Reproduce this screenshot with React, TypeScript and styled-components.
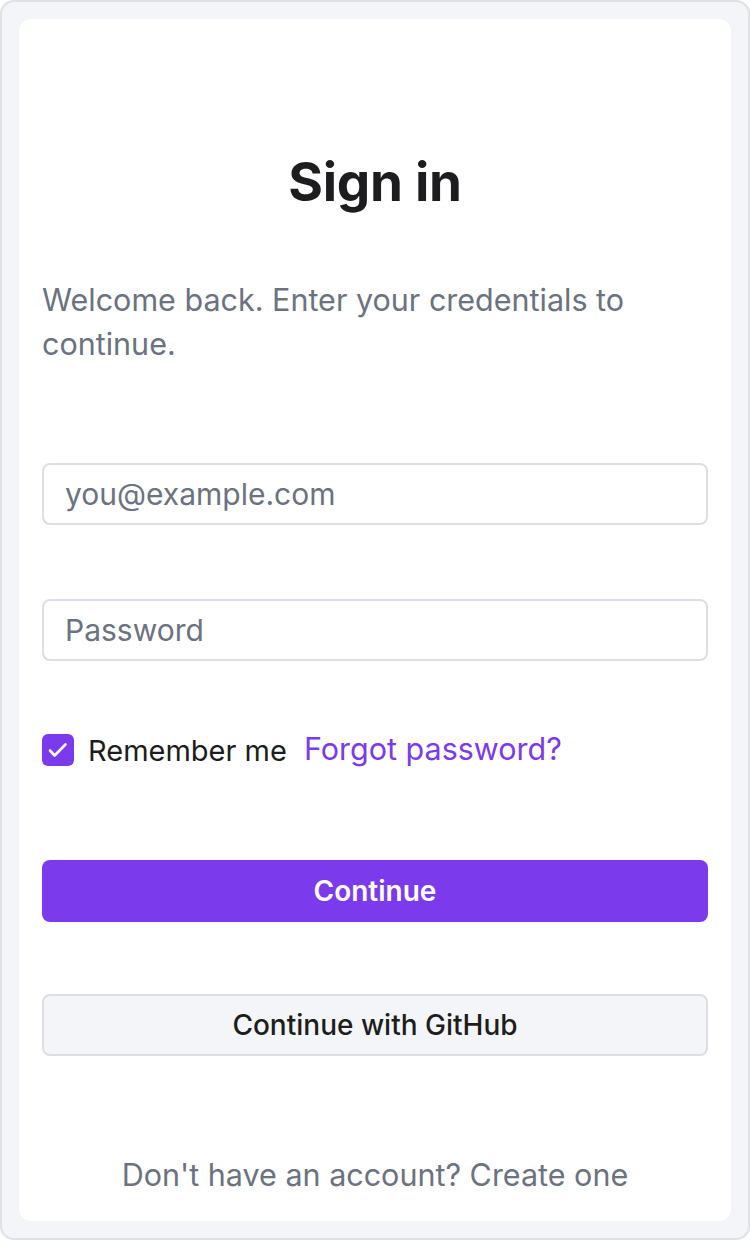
import styled, { createGlobalStyle } from "styled-components";

const GlobalStyle = createGlobalStyle`
  * { box-sizing: border-box; }
  html, body {
    margin: 0;
    padding: 0;
    background: #ffffff;
    font-family: Inter, "Noto Sans", "Liberation Sans", sans-serif;
  }
`;

export default function App() {
  return (
    <>
      <GlobalStyle />
      <Frame>
        <Card>
          <Title>Sign in</Title>
          <Subtitle>Welcome back. Enter your credentials to continue.</Subtitle>

          <Field type="email" placeholder="you@example.com" $top={97} />
          <Field type="password" placeholder="Password" $top={74} />

          <OptionsRow>
            <CheckLabel>
              <CheckBox>
                <svg width="32" height="32" viewBox="0 0 32 32" fill="none">
                  <path
                    d="M8 16.5l4.6 5L23.5 10.5"
                    stroke="#ffffff"
                    strokeWidth="2.6"
                    strokeLinecap="round"
                    strokeLinejoin="round"
                  />
                </svg>
              </CheckBox>
              Remember me
            </CheckLabel>
            <Link href="#">Forgot password?</Link>
          </OptionsRow>

          <Button $variant="primary" $top={88}>
            Continue
          </Button>
          <Button $variant="secondary" $top={72}>
            Continue with GitHub
          </Button>

          <Footer>Don't have an account? Create one</Footer>
        </Card>
      </Frame>
    </>
  );
}

const Frame = styled.div`
  width: 750px;
  height: 1240px;
  padding: 17px;
  background: #f4f5f8;
  border: 2px solid #dfe1e6;
  border-radius: 14px;
  display: flex;
`;

const Card = styled.div`
  flex: 1;
  background: #ffffff;
  border-radius: 12px;
  padding: 134px 23px 0;
  display: flex;
  flex-direction: column;
`;

const Title = styled.h1`
  margin: 0;
  text-align: center;
  font-size: 53px;
  line-height: 58px;
  font-weight: 700;
  color: #1d1d20;
  letter-spacing: -0.3px;
`;

const Subtitle = styled.p`
  margin: 67px 0 0;
  font-size: 30.5px;
  line-height: 44px;
  color: #6b7280;
`;

const Field = styled.input<{ $top: number }>`
  margin-top: ${(p) => p.$top}px;
  height: 62px;
  width: 100%;
  padding: 0 21px;
  border: 2px solid #dcdee3;
  border-radius: 8px;
  background: #ffffff;
  font-family: inherit;
  font-size: 30px;
  color: #1d1d20;
  outline: none;

  &::placeholder {
    color: #6b7280;
  }
`;

const OptionsRow = styled.div`
  margin-top: 67px;
  height: 44px;
  display: flex;
  align-items: center;
  gap: 17px;
`;

const CheckLabel = styled.label`
  display: flex;
  align-items: center;
  gap: 14px;
  font-size: 29px;
  color: #1d1d20;
`;

const CheckBox = styled.span`
  width: 32px;
  height: 32px;
  border-radius: 6px;
  background: #7c3aed;
  display: flex;
  align-items: center;
  justify-content: center;
`;

const Link = styled.a`
  font-size: 30.5px;
  color: #7c3aed;
  text-decoration: none;
  margin-top: -4px;
`;

const Button = styled.button<{ $variant: "primary" | "secondary"; $top: number }>`
  margin-top: ${(p) => p.$top}px;
  height: 62px;
  width: 100%;
  border-radius: 8px;
  font-family: inherit;
  font-size: 28px;
  font-weight: ${(p) => (p.$variant === "primary" ? 600 : 500)};
  color: ${(p) => (p.$variant === "primary" ? "#ffffff" : "#1d1d20")};
  background: ${(p) => (p.$variant === "primary" ? "#7c3aed" : "#f4f5f8")};
  border: ${(p) =>
    p.$variant === "primary" ? "none" : "2px solid #dcdee3"};
  cursor: pointer;
`;

const Footer = styled.p`
  margin: 97px 0 0;
  text-align: center;
  font-size: 30.5px;
  line-height: 44px;
  color: #6b7280;
`;
